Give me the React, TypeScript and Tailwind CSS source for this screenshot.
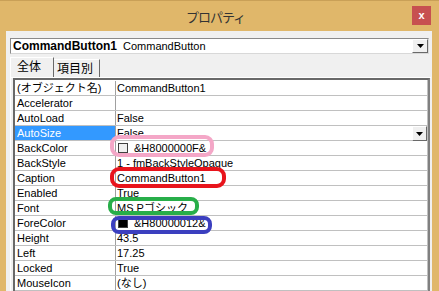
import React from 'react';

type Row = { name: string; value: string; swatch?: string; selected?: boolean; dropdown?: boolean };

const rows: Row[] = [
  { name: '(オブジェクト名)', value: 'CommandButton1' },
  { name: 'Accelerator', value: '' },
  { name: 'AutoLoad', value: 'False' },
  { name: 'AutoSize', value: 'False', selected: true, dropdown: true },
  { name: 'BackColor', value: '&H8000000F&', swatch: '#F0F0F0' },
  { name: 'BackStyle', value: '1 - fmBackStyleOpaque' },
  { name: 'Caption', value: 'CommandButton1' },
  { name: 'Enabled', value: 'True' },
  { name: 'Font', value: 'MS Pゴシック' },
  { name: 'ForeColor', value: '&H80000012&', swatch: '#000000' },
  { name: 'Height', value: '43.5' },
  { name: 'Left', value: '17.25' },
  { name: 'Locked', value: 'True' },
  { name: 'MouseIcon', value: '(なし)' },
];

const font = "font-['Liberation_Sans','Noto_Sans_CJK_JP',sans-serif]";

function DropButton({ className }: { className: string }) {
  return (
    <div
      className={`flex items-center justify-center bg-[#F0F0F0] border border-t-white border-l-white border-b-[#696969] border-r-[#696969] ${className}`}
    >
      <svg width="7" height="4" viewBox="0 0 7 4">
        <path d="M0 0h7L3.5 4z" fill="#000" />
      </svg>
    </div>
  );
}

export default function App() {
  return (
    <div className={`w-[439px] h-[291px] overflow-hidden bg-[#E0B76A] flex flex-col ${font}`}>
      {/* Title bar */}
      <div className="h-[31px] flex items-start border-t border-[#C9A057]">
        <div className="flex-1" />
        <div className="pt-[6px] text-[13px] tracking-[-1px] leading-[20px] text-[#333] font-['Noto_Sans_CJK_JP',sans-serif]">
          プロパティ
        </div>
        <div className="flex-1 flex justify-end pr-[8px] pt-[5px]">
          <div className="w-[19px] h-[19px] bg-[#C75050] flex items-center justify-center text-white text-[11px] font-bold leading-none">
            x
          </div>
        </div>
      </div>

      {/* Client area */}
      <div className="flex-1 ml-[6px] mr-[7px] bg-[#F0F0F0] flex flex-col pt-[7px] pl-[4px]">
        {/* Object combobox */}
        <div className="h-[16px] mr-[3px] bg-white border border-[#8A8A8A] border-b-[#D8D8D8] border-r-[#D8D8D8] flex items-center">
          <span className="pl-[2px] text-[12px] font-bold text-black leading-none">CommandButton1</span>
          <span className="pl-[6px] text-[11px] text-black leading-none">CommandButton</span>
          <div className="flex-1" />
          <DropButton className="w-[16px] h-[14px]" />
        </div>

        {/* Tabs */}
        <div className="h-[23px] flex items-end font-['Noto_Sans_CJK_JP',sans-serif] text-[12px] text-black">
          <div className="h-[20px] w-[44px] pl-[6px] pb-[3px] border-l border-t border-white border-r border-r-[#696969] flex items-center leading-none">
            全体
          </div>
          <div className="h-[18px] w-[46px] pl-[3px] pb-[2px] border-t border-white border-r border-r-[#696969] flex items-center leading-none">
            項目別
          </div>
        </div>

        {/* Tab page */}
        <div className="flex-1 mr-[1px] border-l border-t border-white pl-[2px]">
          <div className="h-full border-t-2 border-l-2 border-r-2 border-t-[#696969] border-l-[#696969] border-r-[#808080] mr-[1px]">
            <div className="h-full bg-white pt-[1px] border-r border-[#C0C0C0]">
              {rows.map((r) => (
                <div key={r.name} className="h-[15px] flex border-b border-[#C0C0C0] text-[11px] leading-[14px] text-black">
                  <div
                    className={`w-[100px] pl-[2px] shrink-0 whitespace-nowrap ${
                      r.selected ? 'bg-[#3399FF] text-white' : ''
                    }`}
                  >
                    {r.name}
                  </div>
                  <div className="w-px bg-[#A0A0A0]" />
                  <div className="flex-1 flex items-center pl-[1px] whitespace-nowrap">
                    {r.swatch && (
                      <div
                        className="w-[10px] h-[10px] border border-[#404040] mr-[6px] ml-[1px]"
                        style={{ backgroundColor: r.swatch }}
                      />
                    )}
                    <span>{r.value}</span>
                    {r.dropdown && (
                      <>
                        <div className="flex-1" />
                        <DropButton className="w-[15px] h-[15px] -mb-px" />
                      </>
                    )}
                  </div>
                </div>
              ))}
            </div>
          </div>
        </div>
      </div>

      {/* Annotation marks */}
      <div className="absolute left-[110px] top-[135px] w-[104px] h-[22px] border-[4px] border-[#F4A7C7] rounded-[9px]" />
      <div className="absolute left-[110px] top-[167px] w-[116px] h-[21px] border-[4px] border-[#E8141C] rounded-[9px]" />
      <div className="absolute left-[108px] top-[197px] w-[91px] h-[18px] border-[4px] border-[#28AE49] rounded-[8px]" />
      <div className="absolute left-[111px] top-[216px] w-[101px] h-[18px] border-[4px] border-[#3B3FBF] rounded-[8px]" />
    </div>
  );
}
